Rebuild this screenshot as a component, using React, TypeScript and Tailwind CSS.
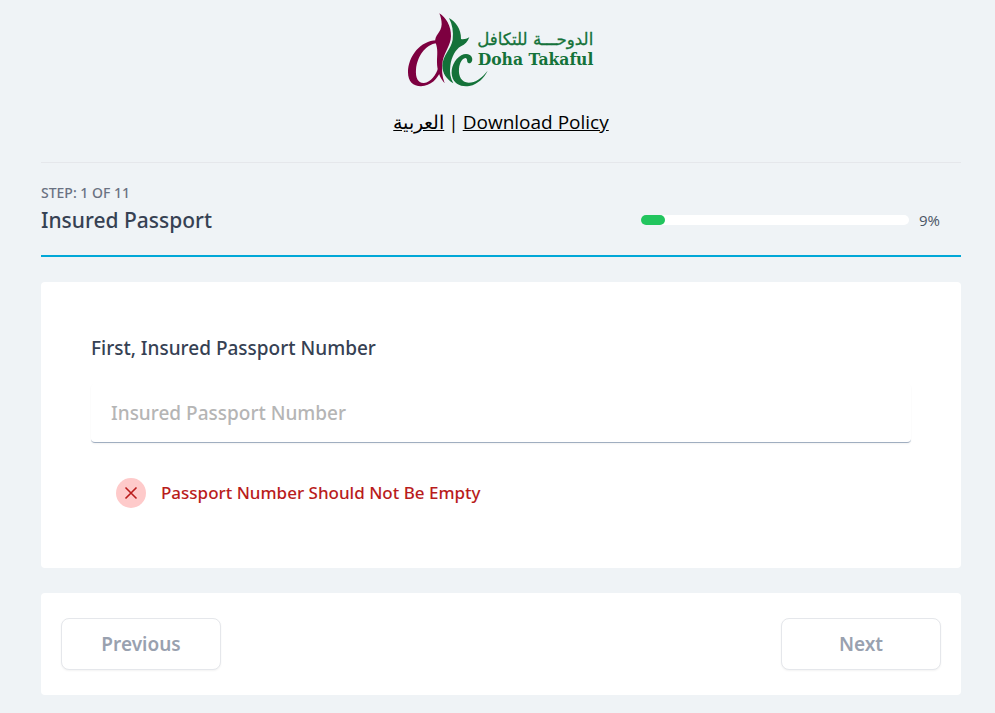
import React from "react";

interface ProgressBarProps {
  step: number;
  total: number;
}

const Logo: React.FC = () => (
  <svg viewBox="0 0 615 270" className="h-[90px] w-[205px]" role="img" aria-label="Doha Takaful">
    <g fill="#7d0040">
      <path d="M121 25 C141 38 157 64 156 94 C155 122 136 142 131 168 C127 192 129 214 137 235 C122 218 114 196 114 172 C114 150 118 132 109 112 C106 90 127 84 128 58 C128 45 125 35 121 25 Z" />
      <path d="M112 106 C65 107 27 154 27 202 C27 229 42 244 66 244 C95 243 116 222 126 196 L120 184 C110 212 96 232 75 234 C57 235 49 219 51 193 C55 154 78 119 114 114 Z" />
    </g>
    <g fill="#147239">
      <path d="M150 39 C169 49 187 72 186 102 C193 105 203 101 211 97 C206 110 198 119 186 124 C169 133 157 158 154 182 C151 202 154 219 163 235 C142 222 130 204 130 182 C131 150 157 132 161 104 C164 80 160 58 150 39 Z" />
      <path d="M219 158 C215 147 200 144 187 151 C166 163 154 190 159 213 C164 237 187 247 211 243 C239 237 256 217 266 197 C249 219 229 233 209 233 C187 232 178 213 180 191 C182 171 192 159 200 159 C207 161 202 172 208 174 C216 177 222 168 219 158 Z" />
    </g>
    <text
      x="583"
      y="119"
      direction="rtl"
      textAnchor="start"
      fill="#147239"
      fontSize="50"
      stroke="#147239"
      strokeWidth="0.8"
      className="font-['DejaVu_Sans',sans-serif]"
    >
      الدوحـــة للتكافل
    </text>
    <text
      x="236"
      y="180"
      fill="#147239"
      fontSize="52"
      fontWeight="700"
      className="font-['DejaVu_Serif_Condensed','DejaVu_Serif',serif]"
    >
      Doha Takaful
    </text>
  </svg>
);

const ProgressBar: React.FC<ProgressBarProps> = ({ step, total }) => {
  const percent = Math.round((step / total) * 100);

  return (
    <div className="flex w-80 items-center">
      <div className="mr-2.5 h-2.5 flex-1 rounded-full bg-white">
        <div className="h-2.5 rounded-full bg-[#22c55e]" style={{ width: `${percent}%` }}></div>
      </div>
      <div className="w-[42px] font-['Open_Sans',sans-serif] text-[15px] leading-5 text-gray-600">{percent}%</div>
    </div>
  );
};

const navButton =
  "h-[52px] w-40 rounded-lg border border-gray-200 bg-white text-center text-[19px] font-semibold text-gray-400 shadow-xs";

const App: React.FC = () => {
  return (
    <div className="min-h-screen bg-[#eff3f6] pt-[5px] pr-[34px] pb-[18px] pl-[41px] font-['Noto_Sans','Open_Sans',sans-serif] text-gray-700">
      <header className="flex flex-col items-center border-b border-gray-200 pb-6">
        <Logo />
        <div className="mt-[11px] flex gap-1 font-['Open_Sans',sans-serif] text-[19px] leading-8 text-black">
          <a href="#ar" lang="ar" className="underline">
            العربية
          </a>
          <span>|</span>
          <a href="#policy" className="underline">
            Download Policy
          </a>
        </div>
      </header>

      <main>
        <div className="border-b-2 border-[#00a7d7] pt-5 pb-[18px]">
          <div className="text-sm leading-5 font-medium text-gray-500 uppercase">
            Step: {1} of {11}
          </div>
          <div className="flex items-center justify-between">
            <h1 className="text-[21px] leading-[34px] font-medium">Insured Passport</h1>
            <ProgressBar step={1} total={11} />
          </div>
        </div>

        <div className="mt-[25px] rounded bg-white px-[50px] pt-[50px] pb-[60px]">
          <label htmlFor="passport" className="block text-[19px] leading-8 font-medium">
            First, Insured Passport Number
          </label>
          <input
            id="passport"
            type="text"
            placeholder="Insured Passport Number"
            className="mt-5 block h-[59px] w-full rounded border-b border-[#a0aec0] px-5 text-[19px] font-medium shadow-xs placeholder:text-[#b5b5b5]"
          />
          <div className="mt-[35px] flex items-center px-[25px]">
            <div className="flex size-[30px] items-center justify-center rounded-full bg-[#fecaca] text-[#b91c1c]">
              <svg viewBox="0 0 16 16" className="size-4" fill="none" stroke="currentColor" strokeWidth="1.6">
                <path d="M2.5 2.5 13.5 13.5 M13.5 2.5 2.5 13.5" />
              </svg>
            </div>
            <p className="ml-[15px] text-[17px] leading-7 font-medium text-[#b91c1c]">
              Passport Number Should Not Be Empty
            </p>
          </div>
        </div>

        <div className="mt-[25px] flex justify-between rounded bg-white px-5 py-[25px]">
          <button type="button" className={navButton}>
            Previous
          </button>
          <button type="button" className={navButton}>
            Next
          </button>
        </div>
      </main>
    </div>
  );
};

export default App;
